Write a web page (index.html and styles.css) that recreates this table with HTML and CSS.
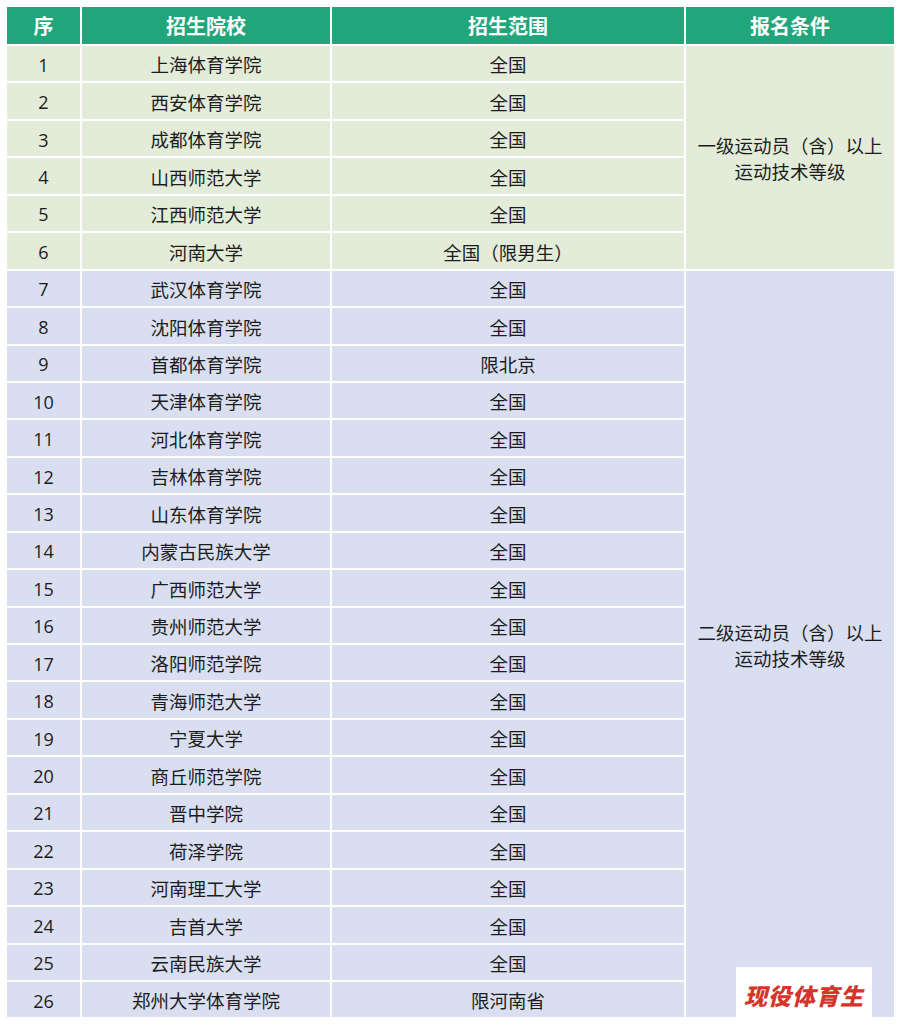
FILE: index.html
```html
<!DOCTYPE html>
<html lang="zh-CN">
<head>
<meta charset="utf-8">
<title>招生院校</title>
<link rel="stylesheet" href="styles.css">
</head>
<body>
<div class="page">
  <div class="table">
    <div class="th">序</div>
    <div class="th">招生院校</div>
    <div class="th">招生范围</div>
    <div class="th">报名条件</div>

    <div class="td g num">1</div><div class="td g">上海体育学院</div><div class="td g">全国</div>
    <div class="td g cond c1">一级运动员（含）以上<br>运动技术等级</div>
    <div class="td g num">2</div><div class="td g">西安体育学院</div><div class="td g">全国</div>
    <div class="td g num">3</div><div class="td g">成都体育学院</div><div class="td g">全国</div>
    <div class="td g num">4</div><div class="td g">山西师范大学</div><div class="td g">全国</div>
    <div class="td g num">5</div><div class="td g">江西师范大学</div><div class="td g">全国</div>
    <div class="td g num">6</div><div class="td g">河南大学</div><div class="td g">全国（限男生）</div>

    <div class="td b num">7</div><div class="td b">武汉体育学院</div><div class="td b">全国</div>
    <div class="td b cond c2">二级运动员（含）以上<br>运动技术等级</div>
    <div class="td b num">8</div><div class="td b">沈阳体育学院</div><div class="td b">全国</div>
    <div class="td b num">9</div><div class="td b">首都体育学院</div><div class="td b">限北京</div>
    <div class="td b num">10</div><div class="td b">天津体育学院</div><div class="td b">全国</div>
    <div class="td b num">11</div><div class="td b">河北体育学院</div><div class="td b">全国</div>
    <div class="td b num">12</div><div class="td b">吉林体育学院</div><div class="td b">全国</div>
    <div class="td b num">13</div><div class="td b">山东体育学院</div><div class="td b">全国</div>
    <div class="td b num">14</div><div class="td b">内蒙古民族大学</div><div class="td b">全国</div>
    <div class="td b num">15</div><div class="td b">广西师范大学</div><div class="td b">全国</div>
    <div class="td b num">16</div><div class="td b">贵州师范大学</div><div class="td b">全国</div>
    <div class="td b num">17</div><div class="td b">洛阳师范学院</div><div class="td b">全国</div>
    <div class="td b num">18</div><div class="td b">青海师范大学</div><div class="td b">全国</div>
    <div class="td b num">19</div><div class="td b">宁夏大学</div><div class="td b">全国</div>
    <div class="td b num">20</div><div class="td b">商丘师范学院</div><div class="td b">全国</div>
    <div class="td b num">21</div><div class="td b">晋中学院</div><div class="td b">全国</div>
    <div class="td b num">22</div><div class="td b">荷泽学院</div><div class="td b">全国</div>
    <div class="td b num">23</div><div class="td b">河南理工大学</div><div class="td b">全国</div>
    <div class="td b num">24</div><div class="td b">吉首大学</div><div class="td b">全国</div>
    <div class="td b num">25</div><div class="td b">云南民族大学</div><div class="td b">全国</div>
    <div class="td b num">26</div><div class="td b">郑州大学体育学院</div><div class="td b">限河南省</div>
  </div>
  <div class="watermark">现役体育生</div>
</div>
</body>
</html>
```

FILE: styles.css
```css
html, body {
  margin: 0;
  padding: 0;
  background: #ffffff;
}

.page {
  position: relative;
  width: 900px;
  height: 1025px;
  padding: 7px 0 0 7px;
  box-sizing: border-box;
  font-family: "Noto Sans CJK SC", "Noto Sans", sans-serif;
  color: #1c1c1c;
}

.table {
  display: grid;
  grid-template-columns: 73px 248px 352px 208px;
  grid-template-rows: 37px repeat(26, 35.44px);
  gap: 2px;
  width: 887px;
}

.th {
  background: #21a67c;
  color: #ffffff;
  font-weight: 700;
  font-size: 20px;
  display: flex;
  align-items: center;
  justify-content: center;
  line-height: 1;
  padding-top: 1px;
}

.td {
  display: flex;
  align-items: center;
  justify-content: center;
  font-size: 18.5px;
  line-height: 1;
  padding-top: 2px;
  box-sizing: border-box;
}

.num {
  font-family: "Open Sans", "Noto Sans", sans-serif;
  font-size: 18px;
}

.g {
  background: #e2ecd9;
}

.b {
  background: #d9dff0;
}

.cond {
  text-align: center;
  line-height: 26px;
  grid-column: 4;
}

.c1 {
  grid-row: 2 / span 6;
}

.c2 {
  grid-row: 8 / span 20;
}

.watermark {
  position: absolute;
  left: 736px;
  top: 967px;
  width: 136px;
  height: 51px;
  background: #ffffff;
  color: #d5342b;
  font-weight: 900;
  font-style: italic;
  font-size: 23px;
  letter-spacing: 1px;
  display: flex;
  align-items: center;
  justify-content: center;
  padding-top: 4px;
  box-sizing: border-box;
}
```
